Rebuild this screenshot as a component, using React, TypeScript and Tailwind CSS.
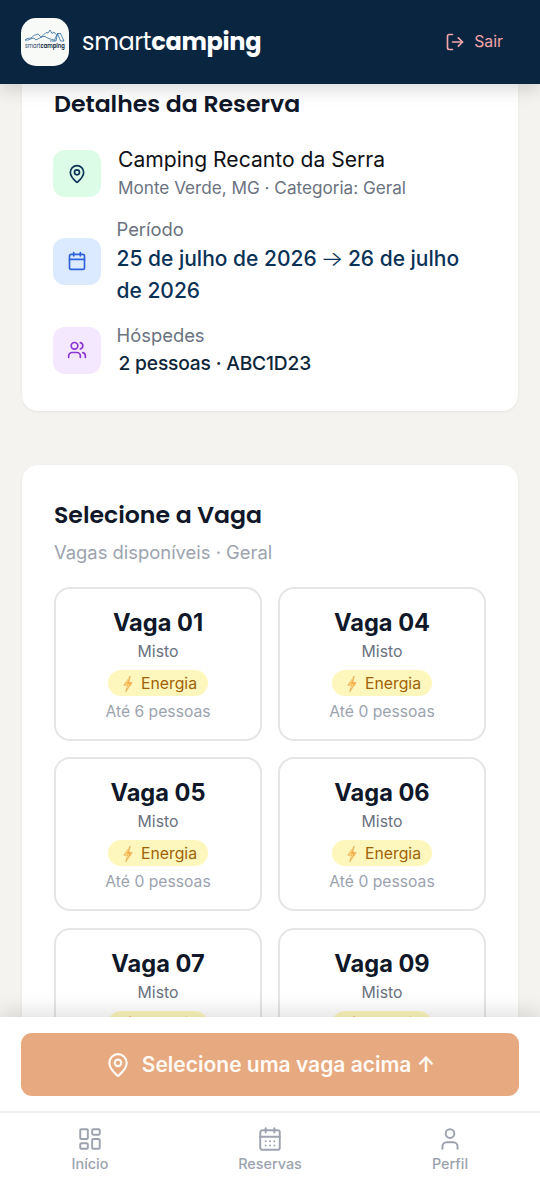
import { Calendar, CalendarDays, LayoutDashboard, LogOut, MapPin, User, Users } from 'lucide-react';

const vagas = [
  { id: '01', tipo: 'Misto', pessoas: 6 },
  { id: '04', tipo: 'Misto', pessoas: 0 },
  { id: '05', tipo: 'Misto', pessoas: 0 },
  { id: '06', tipo: 'Misto', pessoas: 0 },
  { id: '07', tipo: 'Misto', pessoas: 0 },
  { id: '09', tipo: 'Misto', pessoas: 0 },
];

const navItems = [
  { label: 'Início', icon: LayoutDashboard },
  { label: 'Reservas', icon: CalendarDays },
  { label: 'Perfil', icon: User },
];

function Logo() {
  return (
    <div className="w-12 h-12 rounded-[15px] bg-[#f8faf8] overflow-hidden">
      <svg viewBox="0 0 48 48" className="w-12 h-12" fill="none" stroke="#2c6797" strokeWidth="0.8" strokeLinejoin="round">
        <path d="M4 22 C6 20 8 20.5 10 20 C12 18.5 13 16.5 15 17 L17 15.8 L20 19.2 L22 17.5 L25 14.5 L27 15 L29 12 L31 15.5 L33 14 L35 16.5" />
        <path d="M4 22 C8 23 10 20 13 20 C14 21.5 14 22 16 21.5 C19 20 21 18 24 18.5 C27 20.5 29 21 33 22" />
        <path d="M33 23 L36.5 15.5 H39.5 L43 23 H39.5 L36.5 15.5 M36.5 15.5 L35 23 H29" />
        <text x="4" y="30" fontSize="6.4" textLength="15.5" lengthAdjust="spacingAndGlyphs" fill="#1c4468" stroke="none" fontFamily="Poppins, Inter, sans-serif">smart</text>
        <text x="19.5" y="30" fontSize="6.4" textLength="24.3" lengthAdjust="spacingAndGlyphs" fill="#0a2540" stroke="none" fontWeight="600" fontFamily="Poppins, Inter, sans-serif">camping</text>
      </svg>
    </div>
  );
}

function Raio() {
  return (
    <svg viewBox="0 0 12 18" className="w-3 h-[18px]">
      <path d="M8.4 1 L1.8 10.2 H5.6 L3.6 17 L10.2 7.6 H6.8 Z" fill="#f5b24a" stroke="#e39a48" strokeWidth="0.5" />
      <path d="M7.2 3 L3.6 9.4 H6.6 L5.4 13.5" fill="none" stroke="#fde58a" strokeWidth="0.8" />
    </svg>
  );
}

function VagaCard({ vaga }: { vaga: (typeof vagas)[number] }) {
  return (
    <button className="h-[154px] rounded-2xl border-2 border-[#e4e5e7] bg-white flex flex-col items-center pt-[17px]">
      <span className="text-[23.6px] leading-[34px] font-bold text-[#0f1729]">Vaga {vaga.id}</span>
      <span className="mt-px text-[15.8px] leading-[21px] text-[#6b7280]">{vaga.tipo}</span>
      <span className="mt-2 h-[26px] w-[100px] rounded-full bg-[#fef7bd] flex items-center justify-center gap-[7px] pl-[3px] pt-px text-[15.8px] text-[#a16207]">
        <Raio />
        Energia
      </span>
      <span className="mt-[5px] text-[15.7px] leading-[21px] text-[#9ca3af]">Até {vaga.pessoas} pessoas</span>
    </button>
  );
}

export default function App() {
  return (
    <div className="w-full h-[1182px] flex flex-col overflow-hidden bg-[#f4f3ef] font-['Inter',sans-serif]">
      <header className="relative z-10 h-[84px] shrink-0 bg-[#0a2540] flex items-center justify-between pl-[21px] pr-[37px] shadow-[0_6px_16px_rgba(0,0,0,0.14)]">
        <div className="flex items-center gap-[13px]">
          <Logo />
          <div className="font-['Poppins','Inter',sans-serif] text-[24px] leading-8 text-white whitespace-nowrap">
            <span className="tracking-[-0.4px]">smart</span>
            <span className="font-bold tracking-[-0.3px]">camping</span>
          </div>
        </div>
        <button className="flex items-center gap-[9px] text-[15.8px] text-[#f5a5a8]">
          <LogOut size={20} strokeWidth={2} />
          Sair
        </button>
      </header>

      <main className="flex-1 min-h-0 overflow-hidden px-[22px]">
        {/* Detalhes da Reserva */}
        <section className="h-[327px] px-8 bg-white rounded-b-2xl shadow-[0_1px_3px_rgba(0,0,0,0.06)]">
          <h2 className="pt-[2px] font-['Poppins','Inter',sans-serif] text-[23.6px] leading-9 font-semibold text-[#0f1729]">
            Detalhes da Reserva
          </h2>
          <div className="mt-[22px] -ml-px flex flex-col gap-[15.3px]">
            <div className="flex items-center gap-[17px]">
              <div className="mt-[2px] w-12 h-[47px] shrink-0 rounded-xl bg-[#dcfce7] flex items-center justify-center">
                <MapPin size={20} className="text-[#0a3556]" />
              </div>
              <div className="whitespace-nowrap">
                <p className="text-[21.1px] leading-[31px] text-[#0f1115]">Camping Recanto da Serra</p>
                <p className="text-[17.15px] leading-[26px] text-[#6b7280]">Monte Verde, MG · Categoria: Geral</p>
              </div>
            </div>
            <div className="flex items-center gap-[15.5px]">
              <div className="w-12 h-[47px] shrink-0 rounded-xl bg-[#dbeafe] flex items-center justify-center">
                <Calendar size={20} className="text-[#2d62dc]" />
              </div>
              <div>
                <p className="text-[18.4px] leading-[26px] text-[#6b7280]">Período</p>
                <p className="pt-px text-[21px] leading-[31.5px] font-medium text-[#0a3256]">
                  25 de julho de 2026 <span className="inline-block font-light scale-x-[1.15]">→</span> 26 de julho de 2026
                </p>
              </div>
            </div>
            <div className="flex items-center gap-[15.5px]">
              <div className="w-12 h-[47px] shrink-0 rounded-xl bg-[#f3e8ff] flex items-center justify-center">
                <Users size={20} className="text-[#8b35d6]" />
              </div>
              <div>
                <p className="text-[18.4px] leading-[26px] text-[#6b7280]">Hóspedes</p>
                <p className="pl-[2px] text-[19.2px] leading-[31.5px] tracking-[-0.17px] font-medium text-[#0c2538]">2 pessoas · ABC1D23</p>
              </div>
            </div>
          </div>
        </section>

        {/* Selecione a Vaga */}
        <section className="mt-[54px] px-8 pt-8 pb-8 bg-white rounded-2xl shadow-[0_1px_3px_rgba(0,0,0,0.06)]">
          <h2 className="font-['Poppins','Inter',sans-serif] text-[23.6px] leading-9 font-semibold text-[#0f1729]">
            Selecione a Vaga
          </h2>
          <p className="mt-[6px] text-[18.4px] leading-[26px] text-[#9ca3af]">Vagas disponíveis · Geral</p>
          <div className="mt-[22px] grid grid-cols-2 gap-x-4 gap-y-[16.3px]">
            {vagas.map((vaga) => (
              <VagaCard key={vaga.id} vaga={vaga} />
            ))}
          </div>
        </section>
      </main>

      <footer className="relative z-10 h-[165px] shrink-0 bg-white shadow-[0_-5px_20px_rgba(0,0,0,0.13)]">
        <div className="h-[94px] px-[21px] pt-4">
          <button className="w-full h-[63px] rounded-[11px] bg-[#e7a97f] flex items-center justify-center gap-[11px] text-[21px] font-semibold text-[#fffaf5]">
            <MapPin size={26} />
            Selecione uma vaga acima ↑
          </button>
        </div>
        <nav className="h-[71px] border-t-2 border-[#f0f1f3] grid grid-cols-3">
          {navItems.map(({ label, icon: Icon }) => (
            <button key={label} className="flex flex-col items-center pt-[13px] text-[#9ca3af]">
              <Icon size={26} strokeWidth={1.8} />
              <span className="mt-[2px] text-[14.4px] leading-5 font-medium">{label}</span>
            </button>
          ))}
        </nav>
      </footer>
    </div>
  );
}
